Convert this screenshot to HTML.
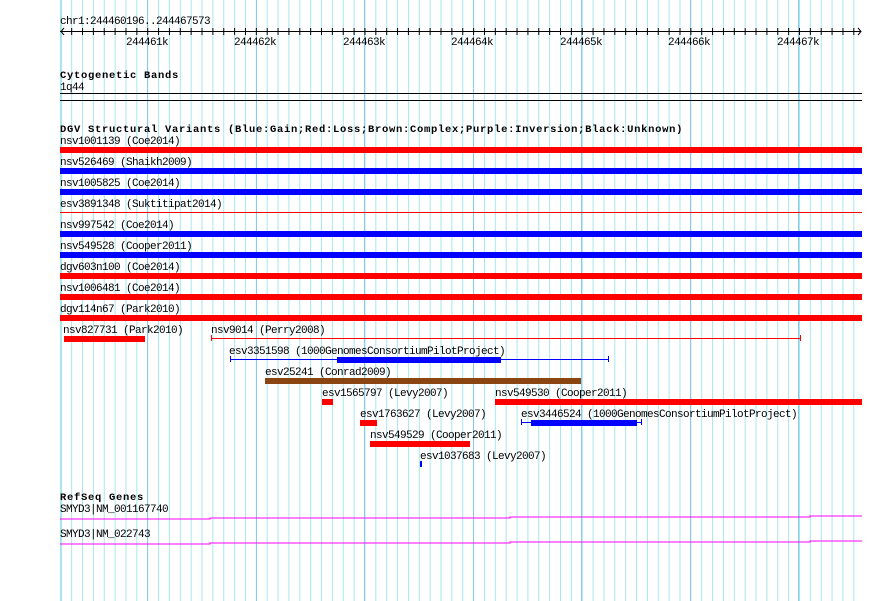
<!DOCTYPE html>
<html><head><meta charset="utf-8"><style>
html,body{margin:0;padding:0;background:#fff;width:890px;height:601px;overflow:hidden}
svg text{font-family:"Liberation Mono",monospace;font-size:11px;letter-spacing:-0.6px;fill:#000}
svg text.b{font-size:10.5px;font-weight:bold;letter-spacing:0.7px}
</style></head><body>
<svg width="890" height="601" xmlns="http://www.w3.org/2000/svg">
<defs>
<pattern id="g" x="60.3" y="0" width="10.863" height="601" patternUnits="userSpaceOnUse">
<rect x="0" y="0" width="1" height="601" fill="#a8e6ee"/></pattern>
<pattern id="t" x="60.3" y="0" width="10.863" height="601" patternUnits="userSpaceOnUse">
<rect x="0" y="28" width="1" height="7" fill="#000"/></pattern>
</defs>
<rect x="60" y="0" width="803" height="601" fill="url(#g)"/>
<rect x="60" y="0" width="2" height="601" fill="#a8e6ee"/>
<g fill="#8cc8ec">
<rect x="147" y="0" width="1" height="601"/><rect x="256" y="0" width="1" height="601"/>
<rect x="364" y="0" width="1" height="601"/><rect x="473" y="0" width="1" height="601"/>
<rect x="581" y="0" width="1" height="601"/><rect x="690" y="0" width="1" height="601"/>
<rect x="798" y="0" width="1" height="601"/></g>

<text x="60" y="24">chr1:244460196..244467573</text>
<rect x="60" y="31" width="801" height="1" fill="#000"/>
<rect x="65" y="27" width="796" height="8" fill="url(#t)"/>
<path d="M64 28 L61 31.5 L64 35 M858 28 L861 31.5 L858 35" stroke="#000" fill="none"/>
<text x="126" y="45">244461k</text><text x="234" y="45">244462k</text>
<text x="343" y="45">244463k</text><text x="451" y="45">244464k</text>
<text x="560" y="45">244465k</text><text x="668" y="45">244466k</text>
<text x="777" y="45">244467k</text>

<text class="b" x="60" y="78">Cytogenetic Bands</text>
<text x="60" y="90">1q44</text>
<rect x="60" y="93" width="802" height="1" fill="#000"/>
<rect x="60" y="100" width="802" height="1" fill="#000"/>

<text class="b" x="60" y="132">DGV Structural Variants (Blue:Gain;Red:Loss;Brown:Complex;Purple:Inversion;Black:Unknown)</text>
<text x="60" y="144">nsv1001139 (Coe2014)</text><rect x="60" y="147" width="802" height="6" fill="#f00"/>
<text x="60" y="165">nsv526469 (Shaikh2009)</text><rect x="60" y="168" width="802" height="6" fill="#00f"/>
<text x="60" y="186">nsv1005825 (Coe2014)</text><rect x="60" y="189" width="802" height="6" fill="#00f"/>
<text x="60" y="207">esv3891348 (Suktitipat2014)</text><rect x="60" y="212" width="802" height="1" fill="#f00"/>
<text x="60" y="228">nsv997542 (Coe2014)</text><rect x="60" y="231" width="802" height="6" fill="#00f"/>
<text x="60" y="249">nsv549528 (Cooper2011)</text><rect x="60" y="252" width="802" height="6" fill="#00f"/>
<text x="60" y="270">dgv603n100 (Coe2014)</text><rect x="60" y="273" width="802" height="6" fill="#f00"/>
<text x="60" y="291">nsv1006481 (Coe2014)</text><rect x="60" y="294" width="802" height="6" fill="#f00"/>
<text x="60" y="312">dgv114n67 (Park2010)</text><rect x="60" y="315" width="802" height="6" fill="#f00"/>

<text x="63" y="333">nsv827731 (Park2010)</text><rect x="64" y="336" width="81" height="6" fill="#f00"/>
<text x="211" y="333">nsv9014 (Perry2008)</text>
<rect x="211" y="338" width="590" height="1" fill="#f00"/><rect x="211" y="335" width="1" height="6" fill="#f00"/><rect x="800" y="335" width="1" height="6" fill="#f00"/>
<text x="229" y="354">esv3351598 (1000GenomesConsortiumPilotProject)</text>
<rect x="230" y="359" width="379" height="1" fill="#00f"/><rect x="230" y="356" width="1" height="6" fill="#00f"/><rect x="608" y="356" width="1" height="6" fill="#00f"/>
<rect x="337" y="357" width="164" height="6" fill="#00f"/>
<text x="265" y="375">esv25241 (Conrad2009)</text><rect x="265" y="378" width="316" height="6" fill="#8b4513"/>
<text x="322" y="396">esv1565797 (Levy2007)</text><rect x="322" y="399" width="11" height="6" fill="#f00"/>
<text x="495" y="396">nsv549530 (Cooper2011)</text><rect x="495" y="399" width="367" height="6" fill="#f00"/>
<text x="360" y="417">esv1763627 (Levy2007)</text><rect x="360" y="420" width="17" height="6" fill="#f00"/>
<text x="521" y="417">esv3446524 (1000GenomesConsortiumPilotProject)</text>
<rect x="521" y="422" width="121" height="1" fill="#00f"/><rect x="521" y="419" width="1" height="6" fill="#00f"/><rect x="641" y="419" width="1" height="6" fill="#00f"/>
<rect x="531" y="420" width="106" height="6" fill="#00f"/>
<text x="370" y="438">nsv549529 (Cooper2011)</text><rect x="370" y="441" width="100" height="6" fill="#f00"/>
<text x="420" y="459">esv1037683 (Levy2007)</text><rect x="420" y="461" width="2" height="6" fill="#00f"/>

<text class="b" x="60" y="500">RefSeq Genes</text>
<text x="60" y="512">SMYD3|NM_001167740</text>
<path d="M60 519H210V518H510V517H810V516H862" stroke="#f0f" fill="none"/>
<text x="60" y="537">SMYD3|NM_022743</text>
<path d="M60 544H210V543H510V542H810V541H862" stroke="#f0f" fill="none"/>
</svg>
</body></html>
